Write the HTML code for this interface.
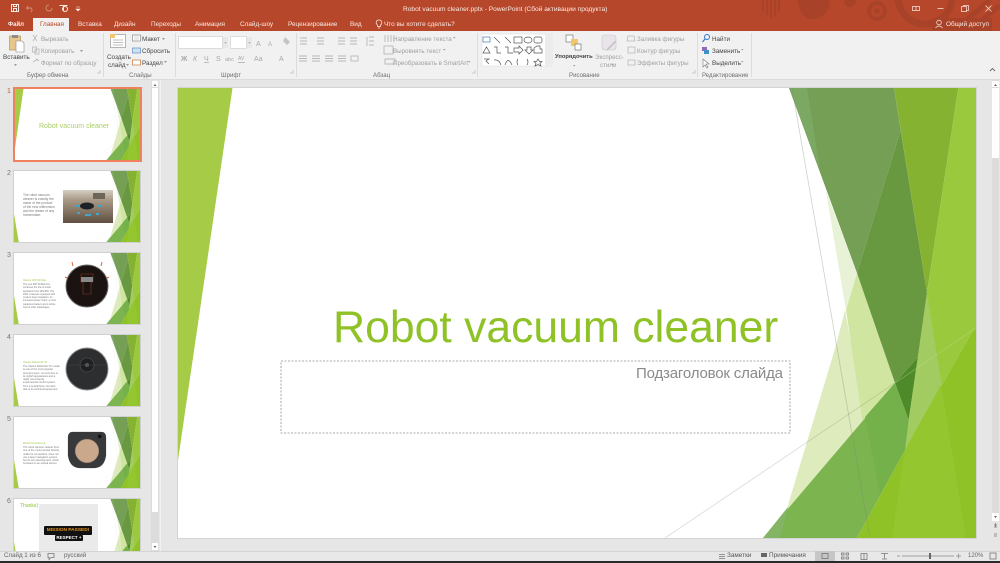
<!DOCTYPE html>
<html lang="ru"><head><meta charset="utf-8"><title>Robot vacuum cleaner.pptx - PowerPoint</title>
<style>
html,body{margin:0;padding:0;width:1000px;height:563px;overflow:hidden;background:#e6e6e6}
body{position:relative;font-family:"Liberation Sans",sans-serif}
.a{position:absolute;white-space:nowrap;line-height:1}
.t{font-size:6.4px;color:#fbe9e3}
.r{font-size:6.3px;color:#444}
.d{font-size:6.2px;color:#a0a0a0}
.g{font-size:6.1px;color:#6e6e6e}
.sep{position:absolute;top:33px;width:1px;height:44px;background:#dcdcdc}
.th{position:absolute;left:14px;width:126px;height:71px;background:#fff;outline:1px solid #d0d0d0;overflow:hidden}
.n{position:absolute;left:7px;font-size:7px;color:#777;line-height:1}
.tx{position:absolute;font-size:3.3px;line-height:4.1px;color:#777;white-space:nowrap}
.hd{position:absolute;font-size:2.7px;color:#9cc84a;white-space:nowrap}
</style></head><body>
<svg width="0" height="0" style="position:absolute"><defs>
<symbol id="decor" viewBox="178 88 798 450" preserveAspectRatio="none">
<path d="M825.7 190L856.7 273L846 310Z" fill="#e8f2d6"/>
<path d="M845 310L866 425L785 515L836.7 343Z" fill="#deebbd"/>
<path d="M857 273L895 383L863 424L846 310Z" fill="#d0e5a0"/>
<path d="M789 88L894 88L900.7 130L857 273Z" fill="#749f55"/>
<path d="M789 88L807 88L820 170Z" fill="#7ba863"/>
<path d="M900.7 130L927 293L918 357L895 383L857 273Z" fill="#68983f"/>
<path d="M894 88L958.3 88L927 293Z" fill="#86b232"/>
<path d="M958.3 88L976 88L976 325L905 450L927 293Z" fill="#9ac93d"/>
<path d="M895 383L918 357L908.7 420Z" fill="#4f8a2a"/>
<path d="M927 293L941.7 385L913 435L905 450L908.7 420Z" fill="#a2cc62"/>
<path d="M895 383L908.7 420L905 450L857 538L763 538Z" fill="#7cb450"/>
<path d="M865 417L895 383L908.7 420L905 450L880 495Z" fill="#75b14a"/>
<path d="M788 507L763 538L780 538Z" fill="#83b565"/>
<path d="M976 325L976 538L857 538L905 450Z" fill="#8fc227"/>
<path d="M905 450L941 385L966 538L892 538Z" fill="#94c62f"/>
<path d="M792 88L870 538" stroke="#7f8a72" stroke-opacity=".38" stroke-width=".8" fill="none"/>
<path d="M665 538L895 383" stroke="#7f8a72" stroke-opacity=".3" stroke-width=".8" fill="none"/>
<path d="M895 383L976 328" stroke="#c8dc98" stroke-opacity=".4" stroke-width=".8" fill="none"/>
</symbol>
</defs></svg>

<!-- title bar -->
<div class="a" style="left:0;top:0;width:1000px;height:31px;background:#b7472a"></div>
<svg class="a" style="left:0;top:0" width="1000" height="31">
<g fill="#a8432a">
<rect x="762" y="0" width="2" height="12"/><rect x="766" y="0" width="2" height="15"/><rect x="770" y="0" width="2" height="18"/><rect x="774" y="0" width="2" height="16"/><rect x="778" y="0" width="2" height="11"/>
<path d="M797 0h33v4q-3 12-14 15h-7q-9-3-12-19z"/>
<circle cx="850" cy="1" r="6"/>
</g>
<circle cx="877" cy="11" r="8" fill="none" stroke="#a8432a" stroke-width="4"/>
<circle cx="877" cy="11" r="3" fill="#a8432a"/>
<circle cx="925" cy="-3" r="27" fill="none" stroke="#a8432a" stroke-width="7"/>
<path d="M958 27L990 0M974 27L1000 5" stroke="#a8432a" stroke-width="5"/>
<rect x="932" y="18" width="60" height="13" fill="#a8432a"/>
<!-- QAT -->
<g fill="none" stroke="#fbe9e3" stroke-width="1">
<rect x="11.500" y="4.500" width="7" height="7"/><rect x="13.500" y="8.500" width="3" height="3"/><path d="M13.500 4.500v2h3v-2"/>
<path d="M59.500 5.500h8M63.500 5.500v5"/><circle cx="65" cy="9" r="2.500"/>
</g>
<g fill="none" stroke="#cf8b76" stroke-width="1"><path d="M28 6l-1.500 2 2 1.500M27 8h4q2 2 0 4"/><path d="M49 5a3 3 0 1 0 3 3"/></g>
<path d="M76 7h4M76 9l2 2 2-2z" fill="#fbe9e3" stroke="#fbe9e3" stroke-width=".6"/>
<!-- window controls -->
<g fill="none" stroke="#f6dcd3" stroke-width=".8">
<rect x="912.500" y="6.500" width="7" height="4"/><path d="M916 6.500v4"/>
<path d="M937.500 8.500h6"/>
<rect x="961.500" y="6.500" width="5" height="5"/><path d="M963.500 6.500v-1h5v5h-2"/>
<path d="M985.500 5.500l6 6M991.500 5.500l-6 6"/>
<circle cx="939" cy="22.500" r="2.300"/><path d="M935.500 28q3.500-4 7 0"/>
</g>
</svg>
<div class="a" style="left:403px;top:7px;font-size:6.600px;color:#fbe9e3">Robot vacuum cleaner.pptx - PowerPoint (Сбой активации продукта)</div>

<!-- tabs -->
<div class="a" style="left:33px;top:18px;width:36px;height:14px;background:#f1f1f1"></div>
<div class="a t" style="left:8px;top:22px;font-weight:bold;font-size:6px">Файл</div>
<div class="a" style="left:40px;top:22px;font-size:6.300px;color:#b7472a">Главная</div>
<div class="a t" style="left:78px;top:22px">Вставка</div>
<div class="a t" style="left:114px;top:22px">Дизайн</div>
<div class="a t" style="left:151px;top:22px">Переходы</div>
<div class="a t" style="left:195px;top:22px">Анимация</div>
<div class="a t" style="left:240px;top:22px">Слайд-шоу</div>
<div class="a t" style="left:288px;top:22px">Рецензирование</div>
<div class="a t" style="left:350px;top:22px">Вид</div>
<div class="a t" style="left:384px;top:22px">Что вы хотите сделать?</div>
<svg class="a" style="left:375px;top:19px" width="8" height="10"><path d="M4 1a2.700 2.700 0 0 0-1.500 5v1.500h3V6A2.700 2.700 0 0 0 4 1zM3 9h2" fill="none" stroke="#fbe9e3" stroke-width=".8"/></svg>
<div class="a t" style="left:946px;top:22px">Общий доступ</div>

<!-- ribbon -->
<div class="a" style="left:0;top:31px;width:1000px;height:48px;background:#f1f1f1"></div>
<div class="a" style="left:0;top:79px;width:1000px;height:1px;background:#dcdcdc"></div>
<div class="sep" style="left:103px"></div><div class="sep" style="left:175px"></div><div class="sep" style="left:296px"></div><div class="sep" style="left:477px"></div><div class="sep" style="left:697px"></div><div class="sep" style="left:751px"></div>

<svg class="a" style="left:0;top:31px" width="1000" height="48">
<!-- paste -->
<rect x="9.500" y="5" width="11" height="14" fill="#e6c68a" stroke="#a98a50" stroke-width=".6"/><rect x="12" y="4" width="6" height="3" fill="#8c8c8c"/><path d="M16 10h6l2 2v9h-8z" fill="#fff" stroke="#888" stroke-width=".6"/>
<g fill="none" stroke="#b8b8b8" stroke-width=".8">
<path d="M33 4l4 6M37 4l-4 6"/><rect x="32.500" y="16" width="4" height="5"/><rect x="35" y="18" width="4" height="5"/><path d="M33 31l5-3M36 28l3 2"/>
</g>
<!-- new slide -->
<rect x="110.500" y="3.500" width="15" height="13" fill="#fff" stroke="#999" stroke-width=".7"/><rect x="110" y="3" width="5" height="4" fill="#f2c76b"/><path d="M113 9h10M113 11.500h10M113 14h10" stroke="#aaa" stroke-width=".7"/>
<rect x="132.500" y="4" width="8" height="6" fill="#fff" stroke="#888" stroke-width=".7"/><path d="M134 6h5M134 8h5" stroke="#aaa" stroke-width=".5"/>
<rect x="132.500" y="17" width="8" height="5" fill="#cfe0f2" stroke="#5b8fc5" stroke-width=".7"/>
<rect x="132.500" y="29" width="8" height="5" fill="#fff" stroke="#c4753a" stroke-width=".7"/>
<!-- dropdown arrows -->
<path d="M14 33h3l-1.500 2zM80 19h3l-1.500 2zM162 7h3l-1.500 2zM164 30h3l-1.500 2zM126 33h3l-1.500 2zM453 6h2.500l-1.250 1.500zM443 18h2.500l-1.250 1.500zM468 30h2.500l-1.250 1.500zM611 33h2.500l-1.250 1.500zM573 34h2.500l-1.250 1.500zM741 18h2.500l-1.250 1.500zM741 30h2.500l-1.250 1.500z" fill="#999"/>
<!-- font boxes -->
<rect x="178.500" y="5.500" width="44" height="12" fill="#fff" stroke="#dcdcdc"/><rect x="223" y="6" width="5" height="11" fill="#e8e8e8"/>
<rect x="230.500" y="5.500" width="16" height="12" fill="#fff" stroke="#dcdcdc"/><rect x="247" y="6" width="5" height="11" fill="#e8e8e8"/>
<path d="M224.500 11h2l-1 2zM248.500 11h2l-1 2z" fill="#aaa"/>
<g fill="#a8a8a8" font-family="Liberation Sans" font-size="7">
<text x="256" y="15">A</text><text x="268" y="15" font-size="6">A</text>
<text x="181" y="30" font-weight="bold">Ж</text><text x="193" y="30" font-style="italic">К</text><text x="204" y="30">Ч</text><text x="216" y="30">S</text><text x="225" y="30" font-size="5.500">abc</text><text x="238" y="29" font-size="5">AV</text><text x="254" y="30">Аа</text><text x="279" y="30">А</text>
</g>
<path d="M204 31.500h5M238 31.500h7" stroke="#a8a8a8" stroke-width=".7"/>
<path d="M285 6l5 5-3 3-4-4z" fill="#c4c4c4"/>
<!-- para -->
<g stroke="#b8b8b8" stroke-width=".9" fill="none">
<path d="M300 7h7M300 10h7M300 13h7M317 7h7M317 10h7M317 13h7M338 7h7M338 10h7M338 13h7M350 7h7M350 10h7M350 13h7"/>
<path d="M369 6h5M369 10h5M369 14h5M367 6v9"/>
<path d="M299 25h8M299 27.500h8M299 30h8M312 25h8M312 27.500h8M312 30h8M325 25h8M325 27.500h8M325 30h8M338 25h8M338 27.500h8M338 30h8"/>
<rect x="351" y="25" width="7" height="5"/>
<path d="M385 4v7M388 4v7M391 4v7M394 4v7"/><rect x="384" y="15" width="9" height="8"/><path d="M385 28h10v5h-10z"/>
</g>
<!-- shapes gallery -->
<rect x="482" y="3" width="70" height="32" fill="#fff" stroke="#dcdcdc" stroke-width=".5"/>
<rect x="545" y="3" width="7" height="32" fill="#ececec"/>
<g fill="none" stroke="#555" stroke-width=".7">
<rect x="483" y="6" width="7" height="5" stroke="#4a78b0"/><path d="M494 6l6 6M505 6l6 6"/><rect x="514" y="6" width="8" height="6"/><ellipse cx="528" cy="9" rx="4" ry="3"/><rect x="534" y="6" width="8" height="6" rx="2"/>
<path d="M483 22l3.500-6 3.500 6zM494 16h3v6h4M505 16h3v6h5"/><path d="M514 17h5v-2l4 4-4 4v-2h-5z"/><path d="M527 16h4v3h2l-4 4-4-4h2z"/><path d="M534 22v-5l3-2h3v3h2v4z"/>
<path d="M484 28h5l-3 2 3 3M494 29q5-1 7 5M505 34q3-9 7 0M518 28q-2 3 0 6M527 28q2 3 0 6"/><path d="M538 28l1.500 2.500h2.500l-2 2 1 2.500-3-1.500-3 1.500 1-2.500-2-2h2.500z"/>
</g>
<!-- arrange -->
<rect x="566" y="4" width="7" height="7" fill="#fff" stroke="#777" stroke-width=".7"/><rect x="571" y="8" width="7" height="7" fill="#f2c76b"/><rect x="575" y="13" width="6" height="6" fill="#fff" stroke="#777" stroke-width=".7"/>
<rect x="602" y="4" width="14" height="15" rx="3" fill="#e8e4ea" stroke="#c8c8c8" stroke-width=".6"/><path d="M607 19l9-9" stroke="#c0c0c0" stroke-width="1.500"/>
<g fill="none" stroke="#b8b8b8" stroke-width=".8"><path d="M628 5h6l1 5h-8zM628 16h7v6h-7zM628 29h7v5h-7z"/></g>
<!-- edit -->
<circle cx="707" cy="6" r="2.500" fill="none" stroke="#2f77c4" stroke-width="1"/><path d="M705 8l-2.500 3" stroke="#2f77c4" stroke-width="1.200"/>
<rect x="702" y="16" width="5" height="4" fill="#8d6bb5"/><rect x="704" y="19" width="5" height="4" fill="#3f8fcb"/>
<path d="M703 28v8l2-2 2 3 1-1-2-3h3z" fill="#fff" stroke="#777" stroke-width=".6"/>
<path d="M990 40l2.500-2.500L995 40" fill="none" stroke="#666" stroke-width=".9"/>
<g fill="none" stroke="#aaa" stroke-width=".6"><path d="M97 42h3v-3M290 42h3v-3M472 42h3v-3M692 42h3v-3"/></g>
</svg>

<div class="a r" style="left:3px;top:55px">Вставить</div>
<div class="a d" style="left:41px;top:37px">Вырезать</div>
<div class="a d" style="left:41px;top:49px">Копировать</div>
<div class="a d" style="left:41px;top:61px">Формат по образцу</div>
<div class="a g" style="left:27px;top:73px">Буфер обмена</div>
<div class="a r" style="left:107px;top:55px">Создать</div>
<div class="a r" style="left:108px;top:63px">слайд</div>
<div class="a r" style="left:142px;top:37px">Макет</div>
<div class="a r" style="left:142px;top:49px">Сбросить</div>
<div class="a r" style="left:142px;top:61px">Раздел</div>
<div class="a g" style="left:129px;top:73px">Слайды</div>
<div class="a g" style="left:221px;top:73px">Шрифт</div>
<div class="a d" style="left:393px;top:37px">Направление текста</div>
<div class="a d" style="left:393px;top:49px">Выровнять текст</div>
<div class="a d" style="left:393px;top:61px">Преобразовать в SmartArt</div>
<div class="a g" style="left:373px;top:73px">Абзац</div>
<div class="a r" style="left:555px;top:55px;font-weight:bold;font-size:5.800px">Упорядочить</div>
<div class="a d" style="left:595px;top:55px">Экспресс-</div>
<div class="a d" style="left:600px;top:63px">стили</div>
<div class="a d" style="left:637px;top:37px">Заливка фигуры</div>
<div class="a d" style="left:637px;top:49px">Контур фигуры</div>
<div class="a d" style="left:637px;top:61px">Эффекты фигуры</div>
<div class="a g" style="left:569px;top:73px">Рисование</div>
<div class="a r" style="left:712px;top:37px">Найти</div>
<div class="a r" style="left:712px;top:49px">Заменить</div>
<div class="a r" style="left:712px;top:61px">Выделить</div>
<div class="a g" style="left:702px;top:73px">Редактирование</div>

<!-- thumbnail pane -->
<div class="th" style="left:15px;top:89px;width:125px;outline:2px solid #f0815f;height:71px">
<svg class="a" style="left:0;top:0" width="125" height="71" viewBox="178 88 798 450" preserveAspectRatio="none"><use href="#decor" x="178" y="88" width="798" height="450"/><path d="M178 88L232 88L178 460Z" fill="#a5cb47"/></svg>
<div class="a" style="left:24px;top:34px;font-size:7px;color:#a9d063">Robot vacuum cleaner</div>
</div>
<div class="n" style="top:88px;color:#c8573a">1</div>

<div class="th" style="top:171px">
<svg class="a" style="left:0;top:0" width="126" height="71" viewBox="178 88 798 450" preserveAspectRatio="none"><use href="#decor" x="178" y="88" width="798" height="450"/><path d="M178 360L208 538L178 538Z" fill="#a5cb47"/></svg>
<div class="tx" style="left:9px;top:22px">The robot vacuum<br>cleaner is exactly the<br>name of the product<br>of the new millennium<br>and the dream of any<br>homemaker.</div>
<svg class="a" style="left:49px;top:19px" width="50" height="33"><defs><linearGradient id="fl" x1="0" y1="0" x2="0" y2="1"><stop offset="0" stop-color="#d5cfc3"/><stop offset=".3" stop-color="#a89a87"/><stop offset="1" stop-color="#5f4e3f"/></linearGradient></defs><rect width="50" height="33" fill="url(#fl)"/><rect x="30" y="3" width="12" height="6" fill="#6e655a"/><ellipse cx="24" cy="16" rx="7" ry="3.500" fill="#1c2226"/><g fill="#3fa7c9"><rect x="12" y="15" width="4" height="2"/><rect x="34" y="15" width="4" height="2"/><rect x="22" y="24" width="6" height="2"/><rect x="14" y="22" width="3" height="2"/><rect x="33" y="23" width="3" height="2"/></g></svg>
</div>
<div class="n" style="top:170px">2</div>

<div class="th" style="top:253px">
<svg class="a" style="left:0;top:0" width="126" height="71" viewBox="178 88 798 450" preserveAspectRatio="none"><use href="#decor" x="178" y="88" width="798" height="450"/><path d="M178 360L208 538L178 538Z" fill="#a5cb47"/></svg>
<div class="hd" style="left:9px;top:26px">Xiaomi 360 S9 Max</div>
<div class="tx" style="left:9px;top:30px;line-height:3.300px;font-size:2.400px">The new 360 S9 Max line<br>continues the line of smart<br>assistants from Qihu360. The<br>2021 model are equipped with<br>modern laser navigation, an<br>increased power motor, a more<br>capacious battery and a whole<br>host of other advantages.</div>
<svg class="a" style="left:48px;top:7px" width="50" height="50"><circle cx="25" cy="26" r="21" fill="#1a1311" stroke="#666" stroke-width="1"/><path d="M19 14h12v8h-2v12h-8V22h-2z" fill="none" stroke="#8a3a20" stroke-width=".6"/><rect x="19" y="17" width="12" height="5" fill="#888"/><path d="M10 2l1 4M40 2l-1 4M3 17l2 1M47 17l-2 1" stroke="#e0642a" stroke-width="1"/></svg>
</div>
<div class="n" style="top:252px">3</div>

<div class="th" style="top:335px">
<svg class="a" style="left:0;top:0" width="126" height="71" viewBox="178 88 798 450" preserveAspectRatio="none"><use href="#decor" x="178" y="88" width="798" height="450"/><path d="M178 360L208 538L178 538Z" fill="#a5cb47"/></svg>
<div class="hd" style="left:9px;top:26px">Xiaomi Roborock S7</div>
<div class="tx" style="left:9px;top:30px;line-height:3.300px;font-size:2.600px">The Xiaomi Roborock S7 model<br>is one of the most popular<br>among buyers, not only due to<br>its stylish appearance and a<br>really conveniently<br>implemented control system<br>from a smartphone, but also<br>due to its technical equipment.</div>
<svg class="a" style="left:48px;top:8px" width="50" height="50"><circle cx="25" cy="26" r="21" fill="#2c2e30" stroke="#8a8a8a" stroke-width="1"/><circle cx="25" cy="22" r="7" fill="#1e2022" stroke="#555" stroke-width=".6"/><path d="M5 22h40" stroke="#44474a" stroke-width=".6"/><circle cx="25" cy="22" r="2" fill="#555"/></svg>
</div>
<div class="n" style="top:334px">4</div>

<div class="th" style="top:417px">
<svg class="a" style="left:0;top:0" width="126" height="71" viewBox="178 88 798 450" preserveAspectRatio="none"><use href="#decor" x="178" y="88" width="798" height="450"/><path d="M178 360L208 538L178 538Z" fill="#a5cb47"/></svg>
<div class="hd" style="left:9px;top:25px">iRobot Roomba s9</div>
<div class="tx" style="left:9px;top:29px;line-height:3.300px;font-size:2.600px">The robot vacuum cleaner from<br>one of the most popular brands,<br>unlike its competitors, does not<br>use a laser navigation system,<br>but its own development, which<br>is based on an optical sensor.</div>
<svg class="a" style="left:53px;top:13px" width="40" height="40" viewBox="0 0 44 44"><path d="M6 2h32q5 0 5 6v20q-2 14-14 14H15Q3 42 1 28V8q0-6 5-6z" fill="#37393b"/><circle cx="22" cy="23" r="13" fill="#c9a88c"/><circle cx="22" cy="23" r="13" fill="none" stroke="#8a7766" stroke-width=".6"/><circle cx="36" cy="7" r="2" fill="#111"/></svg>
</div>
<div class="n" style="top:416px">5</div>

<div class="th" style="top:499px;height:52px">
<svg class="a" style="left:0;top:0" width="126" height="71" viewBox="178 88 798 450" preserveAspectRatio="none"><use href="#decor" x="178" y="88" width="798" height="450"/><path d="M178 360L208 538L178 538Z" fill="#a5cb47"/></svg>
<div class="a" style="left:6px;top:5px;font-size:5px;color:#8fc227">Thanks)</div>
<div class="a" style="left:25px;top:5px;width:59px;height:54px;background:#eaeaea"></div>
<div class="a" style="left:30px;top:27px;width:48px;height:9px;background:#111;border-radius:1px;font-size:4.800px;line-height:9px;font-weight:bold;color:#e8961e;text-align:center">MISSION PASSED!</div>
<div class="a" style="left:41px;top:36px;width:28px;height:6px;background:#111;border-radius:1px;font-size:4.500px;line-height:6px;font-weight:bold;color:#fff;text-align:center">RESPECT +</div>
</div>
<div class="n" style="top:498px">6</div>

<!-- left scrollbar -->
<div class="a" style="left:151px;top:81px;width:8px;height:470px;background:#dcdcdc"></div>
<div class="a" style="left:152px;top:88px;width:6px;height:424px;background:#fff"></div>
<div class="a" style="left:152px;top:81px;width:6px;height:6px;background:#fff"></div>
<div class="a" style="left:152px;top:543px;width:6px;height:7px;background:#fff"></div>
<div class="a" style="left:160px;top:80px;width:1px;height:471px;background:#f2f2f2"></div>
<svg class="a" style="left:152px;top:81px" width="6" height="470"><path d="M1.500 5L3 3L4.500 5zM1.500 465L3 467L4.500 465z" fill="#666"/></svg>

<!-- main slide -->
<div class="a" style="left:178px;top:88px;width:798px;height:450px;background:#fff;outline:1px solid #d4d4d4"></div>
<svg class="a" style="left:178px;top:88px" width="798" height="450" viewBox="178 88 798 450">
<path d="M178 88L232.500 88L178 460Z" fill="#a5cb47"/>
<use href="#decor" x="178" y="88" width="798" height="450"/>
<text x="333" y="342" font-family="Liberation Sans" font-size="44.500" fill="#8fc227">Robot vacuum cleaner</text>
<rect x="281" y="361" width="509" height="72" fill="none" stroke="#8f8f8f" stroke-width=".8" stroke-dasharray="2 1.500"/>
<text x="636" y="378" font-family="Liberation Sans" font-size="15" fill="#8a8a8a" textLength="147" lengthAdjust="spacing">Подзаголовок слайда</text>
</svg>

<!-- right scrollbar -->
<div class="a" style="left:992px;top:80px;width:7px;height:470px;background:#dcdcdc"></div>
<div class="a" style="left:992px;top:81px;width:7px;height:6px;background:#fff"></div>
<div class="a" style="left:992px;top:88px;width:7px;height:70px;background:#fff"></div>
<div class="a" style="left:992px;top:513px;width:7px;height:8px;background:#fff"></div>
<div class="a" style="left:992px;top:521px;width:7px;height:29px;background:#e6e6e6"></div>
<svg class="a" style="left:992px;top:81px" width="7" height="460"><path d="M2 5L3.500 3L5 5zM2 435L3.500 437L5 435z" fill="#666"/><path d="M2 444h3M2 446h3M3.500 442v4M2 453h3M2 455h3" stroke="#777" stroke-width=".8" fill="none"/></svg>

<!-- status bar -->
<div class="a" style="left:0;top:551px;width:1000px;height:9px;background:#e8e8e8;border-top:1px solid #d4d4d4"></div>
<div class="a" style="left:0;top:561px;width:1000px;height:2px;background:#2a2a2a"></div>
<div class="a" style="left:4px;top:553px;font-size:6.200px;color:#666">Слайд 1 из 6</div>
<div class="a" style="left:64px;top:553px;font-size:6.200px;color:#666">русский</div>
<div class="a" style="left:727px;top:553px;font-size:6.400px;color:#555">Заметки</div>
<div class="a" style="left:769px;top:553px;font-size:6.400px;color:#555">Примечания</div>
<div class="a" style="left:968px;top:553px;font-size:6px;color:#666">120%</div>
<div class="a" style="left:815px;top:551px;width:20px;height:10px;background:#c6c6c6"></div>
<svg class="a" style="left:0;top:551px" width="1000" height="10">
<g fill="none" stroke="#777" stroke-width=".8">
<path d="M48 2.500h6v4h-3l-2 2v-2h-1z"/>
<path d="M719 3.500h6M719 5.500h6M719 7.500h6"/>
<rect x="822" y="2.500" width="6" height="5"/>
<rect x="841.500" y="2" width="2.500" height="2"/><rect x="846" y="2" width="2.500" height="2"/><rect x="841.500" y="6" width="2.500" height="2"/><rect x="846" y="6" width="2.500" height="2"/>
<path d="M861 2.500h6v6h-6zM864 2.500v6"/>
<path d="M881 2.500h7M884.500 2.500v5M882 8h5"/>
<rect x="990" y="2" width="6" height="6"/>
</g>
<path d="M761 2h6v4h-6z" fill="#666"/>
<path d="M897 5h3M902 5h52M956 5h5M958.500 2.500v5" stroke="#888" stroke-width=".7" fill="none"/>
<rect x="929" y="2" width="2" height="6" fill="#666"/>
</svg>
</body></html>
